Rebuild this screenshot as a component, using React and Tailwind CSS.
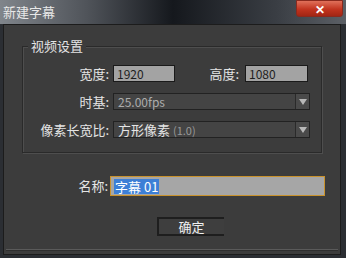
import React from 'react'

const FONT = { fontFamily: '"Noto Sans CJK SC", "Liberation Sans", sans-serif' }

function Arrow() {
  return (
    <div className="flex h-full w-[14px] items-center justify-center border-l border-[#2a2a2a] bg-[#4a4a4a]">
      <svg width="8" height="6" viewBox="0 0 8 6">
        <path d="M0 0h8L4 6z" fill="#b8b8b8" />
      </svg>
    </div>
  )
}

export default function App() {
  return (
    <div className="flex h-[258px] w-[346px] flex-col overflow-hidden bg-[#2b2e33] text-[13px]" style={FONT}>
      {/* title bar */}
      <div className="flex h-[24px] items-start justify-between bg-[linear-gradient(90deg,#80858b_0%,#50545a_25%,#15181d_50%,#3a3e44_80%,#5c6066_100%)]">
        <span className="pl-[3px] pt-[3px] text-[13px] leading-[18px] text-[#e8e8e8]">新建字幕</span>
        <div className="mr-[3px] flex h-[17px] w-[47px] items-center justify-center rounded-b-[3px] border border-[#8a2a1e] bg-[linear-gradient(180deg,#e0705a,#c2341f_55%,#a22614)]">
          <span className="text-[12px] font-bold leading-none text-white">✕</span>
        </div>
      </div>

      {/* body */}
      <div className="ml-[3px] mr-[5px] mb-[3px] flex flex-1 flex-col border border-[#1c1c1c] bg-[#3c3c3c]">
        <div className="px-[18px] pt-[21px]">
          <div className="relative h-[107px] border border-[#2a2a2a] shadow-[inset_1px_1px_0_#4e4e4e,1px_1px_0_#4e4e4e]">
            <span className="absolute left-[5px] top-[-9px] bg-[#3c3c3c] px-[3px] text-[13px] leading-[16px] text-[#e4e4e4]">视频设置</span>
            <div className="flex flex-col gap-[11px] pt-[18px]">
              <div className="flex h-[17px] items-center">
                <span className="w-[86px] text-right text-[#e4e4e4]">宽度:</span>
                <div className="ml-[4px] flex h-[17px] w-[62px] items-center border border-[#1a1a1a] bg-[#a3a3a3] pl-[3px] text-[12px] text-[#1e1e1e]">1920</div>
                <span className="ml-[28px] w-[36px] text-right text-[#e4e4e4]">高度:</span>
                <div className="ml-[6px] flex h-[17px] w-[63px] items-center border border-[#1a1a1a] bg-[#a3a3a3] pl-[3px] text-[12px] text-[#1e1e1e]">1080</div>
              </div>
              <div className="flex h-[17px] items-center">
                <span className="w-[86px] text-right text-[#e4e4e4]">时基:</span>
                <div className="ml-[4px] flex h-[17px] w-[197px] items-center justify-between border border-[#222] bg-[#444444]">
                  <span className="pl-[4px] text-[12px] text-[#acacac]">25.00fps</span>
                  <Arrow />
                </div>
              </div>
              <div className="flex h-[17px] items-center">
                <span className="w-[86px] text-right text-[#e4e4e4]">像素长宽比:</span>
                <div className="ml-[4px] flex h-[17px] w-[197px] items-center justify-between border border-[#222] bg-[#444444]">
                  <span className="pl-[4px] text-[13px] text-[#e4e4e4]">
                    方形像素 <span className="text-[11px] text-[#999]">(1.0)</span>
                  </span>
                  <Arrow />
                </div>
              </div>
            </div>
          </div>
        </div>

        <div className="mt-[23px] flex h-[20px] items-center pl-[18px]">
          <span className="w-[86px] text-right text-[#e4e4e4]">名称:</span>
          <div className="ml-[2px] flex h-[20px] w-[215px] items-center border border-[#c9922c] bg-[#a6a6a6] pl-[3px]">
            <span className="bg-[#3d7fd6] px-[1px] text-[13px] leading-[15px] text-white">字幕 01</span>
          </div>
        </div>

        <div className="mt-[21px] flex pl-[153px]">
          <button className="h-[19px] w-[67px] border-y-2 border-l-2 border-r-0 border-[#1e1e1e] bg-[#3e3e3e] text-[13px] leading-none text-[#f0f0f0]">
            确定
          </button>
        </div>

        <div className="mx-[2px] mt-auto mb-[3px] h-[2px] border-t border-[#5a5a5a] bg-[#2e2e2e]" />
      </div>
    </div>
  )
}
